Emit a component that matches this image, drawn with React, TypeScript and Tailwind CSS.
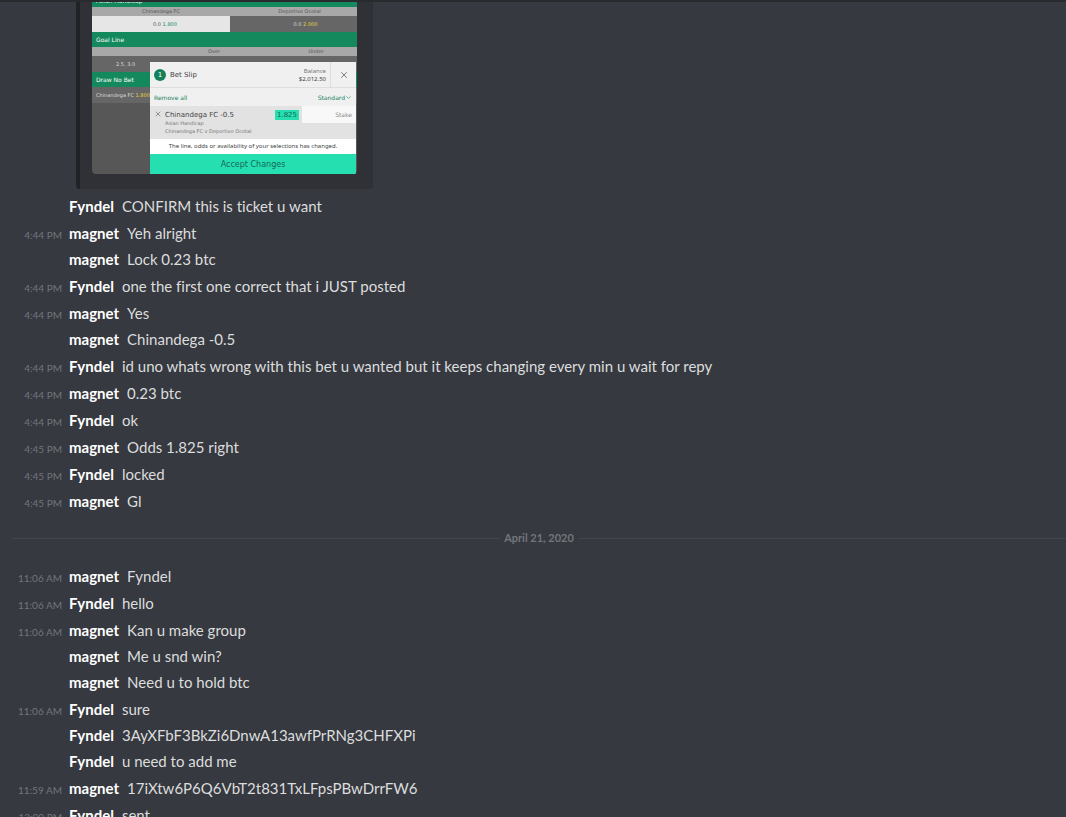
import { ChevronDown, X } from "lucide-react";

type Message = {
  author: string;
  text: string;
  time?: string;
};

const beforeDivider: Message[] = [
  { author: "Fyndel", text: "CONFIRM this is ticket u want" },
  { author: "magnet", text: "Yeh alright", time: "4:44 PM" },
  { author: "magnet", text: "Lock 0.23 btc" },
  {
    author: "Fyndel",
    text: "one the first one correct that i JUST posted",
    time: "4:44 PM",
  },
  { author: "magnet", text: "Yes", time: "4:44 PM" },
  { author: "magnet", text: "Chinandega -0.5" },
  {
    author: "Fyndel",
    text: "id uno whats wrong with this bet u wanted but it keeps changing every min u wait for repy",
    time: "4:44 PM",
  },
  { author: "magnet", text: "0.23 btc", time: "4:44 PM" },
  { author: "Fyndel", text: "ok", time: "4:44 PM" },
  { author: "magnet", text: "Odds 1.825 right", time: "4:45 PM" },
  { author: "Fyndel", text: "locked", time: "4:45 PM" },
  { author: "magnet", text: "Gl", time: "4:45 PM" },
];

const afterDivider: Message[] = [
  { author: "magnet", text: "Fyndel", time: "11:06 AM" },
  { author: "Fyndel", text: "hello", time: "11:06 AM" },
  { author: "magnet", text: "Kan u make group", time: "11:06 AM" },
  { author: "magnet", text: "Me u snd win?" },
  { author: "magnet", text: "Need u to hold btc" },
  { author: "Fyndel", text: "sure", time: "11:06 AM" },
  { author: "Fyndel", text: "3AyXFbF3BkZi6DnwA13awfPrRNg3CHFXPi" },
  { author: "Fyndel", text: "u need to add me" },
  {
    author: "magnet",
    text: "17iXtw6P6Q6VbT2t831TxLFpsPBwDrrFW6",
    time: "11:59 AM",
  },
  { author: "Fyndel", text: "sent", time: "12:00 PM" },
];

function MessageList({ messages }: { messages: Message[] }) {
  return (
    <ul>
      {messages.map((message, index) => (
        <li
          key={index}
          className={`flex items-baseline text-[15px] leading-[26px] ${
            message.time ? "pt-px" : ""
          }`}
        >
          <time className="mr-[7px] w-[62px] shrink-0 text-right text-[10px] leading-4 text-[#72767d]">
            {message.time}
          </time>
          <span className="mr-2 shrink-0 font-bold text-white">
            {message.author}
          </span>
          <p className="min-w-0 break-words text-[#dcddde]">{message.text}</p>
        </li>
      ))}
    </ul>
  );
}

function DateDivider({ label }: { label: string }) {
  return (
    <div className="ml-3 flex h-12 items-center pt-px">
      <div className="h-px flex-1 bg-[#42454c]" />
      <span className="px-1 text-[11px] font-bold text-[#72767d]">
        {label}
      </span>
      <div className="h-px flex-1 bg-[#42454c]" />
    </div>
  );
}

function BetSlip() {
  return (
    <section className="absolute right-px bottom-0 w-[206px] bg-[#f0f0f0] text-[#444]">
      <header className="flex h-[26px] items-center border-b border-[#dedede]">
        <span className="ml-1 flex size-3 items-center justify-center rounded-full bg-[#14805a] text-[7px] leading-3 text-white">
          1
        </span>
        <h2 className="ml-1 flex-1 text-[7px] leading-3">Bet Slip</h2>
        <div className="mr-1 text-right font-['Noto_Sans',sans-serif] text-[6px] leading-[8px]">
          <p className="text-[#777]">Balance</p>
          <p>$2,012.50</p>
        </div>
        <button
          type="button"
          aria-label="Close"
          className="flex h-full w-[26px] items-center justify-center border-l border-[#dedede] text-[#666]"
        >
          <X className="size-[10px]" />
        </button>
      </header>

      <div className="flex h-[18px] items-center justify-between px-1 text-[6px] text-[#14805a]">
        <button type="button">Remove all</button>
        <button type="button" className="flex items-center">
          Standard
          <ChevronDown className="size-[7px]" />
        </button>
      </div>

      <div className="flex h-[33px] items-start bg-[#e2e2e2]">
        <button
          type="button"
          aria-label="Remove"
          className="mt-1 ml-1 text-[#666]"
        >
          <X className="block size-2" />
        </button>
        <div className="ml-[3px] flex-1 pt-[5px] text-[5px] leading-[8px] text-[#777]">
          <h3 className="text-[7px] text-[#444]">Chinandega FC -0.5</h3>
          <p>Asian Handicap</p>
          <p>Chinandega FC v Deportivo Ocotal</p>
        </div>
        <span className="mt-1 mr-[3px] w-[24px] bg-[#26dfb0] text-center text-[7px] leading-[10px] text-[#14695a]">
          1.825
        </span>
        <input
          aria-label="Stake"
          placeholder="Stake"
          className="h-[17px] w-[54px] bg-[#f8f8f8] pr-1 text-right text-[6px] placeholder:text-[#888]"
        />
      </div>

      <p className="bg-white text-center font-['Noto_Sans',sans-serif] text-[6px] leading-[15px]">
        The line, odds or availability of your selections has changed.
      </p>
      <button
        type="button"
        className="block h-5 w-full bg-[#26dfb0] pt-px text-[8px] leading-5 text-[#14695a]"
      >
        Accept Changes
      </button>
    </section>
  );
}

function BetEmbed() {
  return (
    <article className="ml-[76px] w-[297px] rounded-b border-l-4 border-[#202225] bg-[#2f3136] pr-4 pb-[15px] pl-3">
      <div className="relative h-[172px] overflow-hidden rounded-b bg-[#575757] font-['DejaVu_Sans',sans-serif] text-[5px] text-[#555]">
        <h3 className="flex h-[5px] items-end overflow-hidden bg-[#14895d] pl-1 text-[6px] leading-[12px] text-white">
          Asian Handicap
        </h3>
        <div className="flex h-[9px] bg-[#a8a8a8] text-center leading-[9px]">
          <span className="w-[138px]">Chinandega FC</span>
          <span className="flex-1 pl-3">Deportivo Ocotal</span>
        </div>
        <div className="flex h-4 text-center leading-4">
          <span className="w-[138px] bg-[#e6e6e6] pl-2">
            0.0 <b className="font-normal text-[#14895d]">1.800</b>
          </span>
          <span className="flex-1 bg-[#666] pl-6 text-[#ddd]">
            0.0 <b className="font-normal text-[#e6d33c]">2.000</b>
          </span>
        </div>
        <h3 className="h-[15px] bg-[#14895d] pl-1 text-[6px] leading-[15px] text-white">
          Goal Line
        </h3>
        <div className="flex h-[9px] bg-[#a8a8a8] text-center leading-[9px]">
          <span className="w-[69px]" />
          <span className="flex-1 pl-3">Over</span>
          <span className="flex-1 pl-5">Under</span>
        </div>
        <div className="h-4 bg-[#666] pl-6 leading-4 text-[#ddd]">2.5, 3.0</div>
        <h3 className="h-[15px] bg-[#14895d] pl-1 text-[6px] leading-[15px] text-white">
          Draw No Bet
        </h3>
        <div className="h-4 bg-[#666] pl-1 leading-4 text-[#ddd]">
          Chinandega FC <b className="font-normal text-[#e6d33c]">1.800</b>
        </div>
        <BetSlip />
      </div>
    </article>
  );
}

export default function App() {
  return (
    <main className="h-screen overflow-hidden border-t-2 border-[#282a2e] bg-[#36393f] font-['Lato','Noto_Sans',sans-serif] [font-variant-ligatures:none]">
      <div className="mb-1">
        <BetEmbed />
      </div>
      <MessageList messages={beforeDivider} />
      <DateDivider label="April 21, 2020" />
      <MessageList messages={afterDivider} />
    </main>
  );
}
